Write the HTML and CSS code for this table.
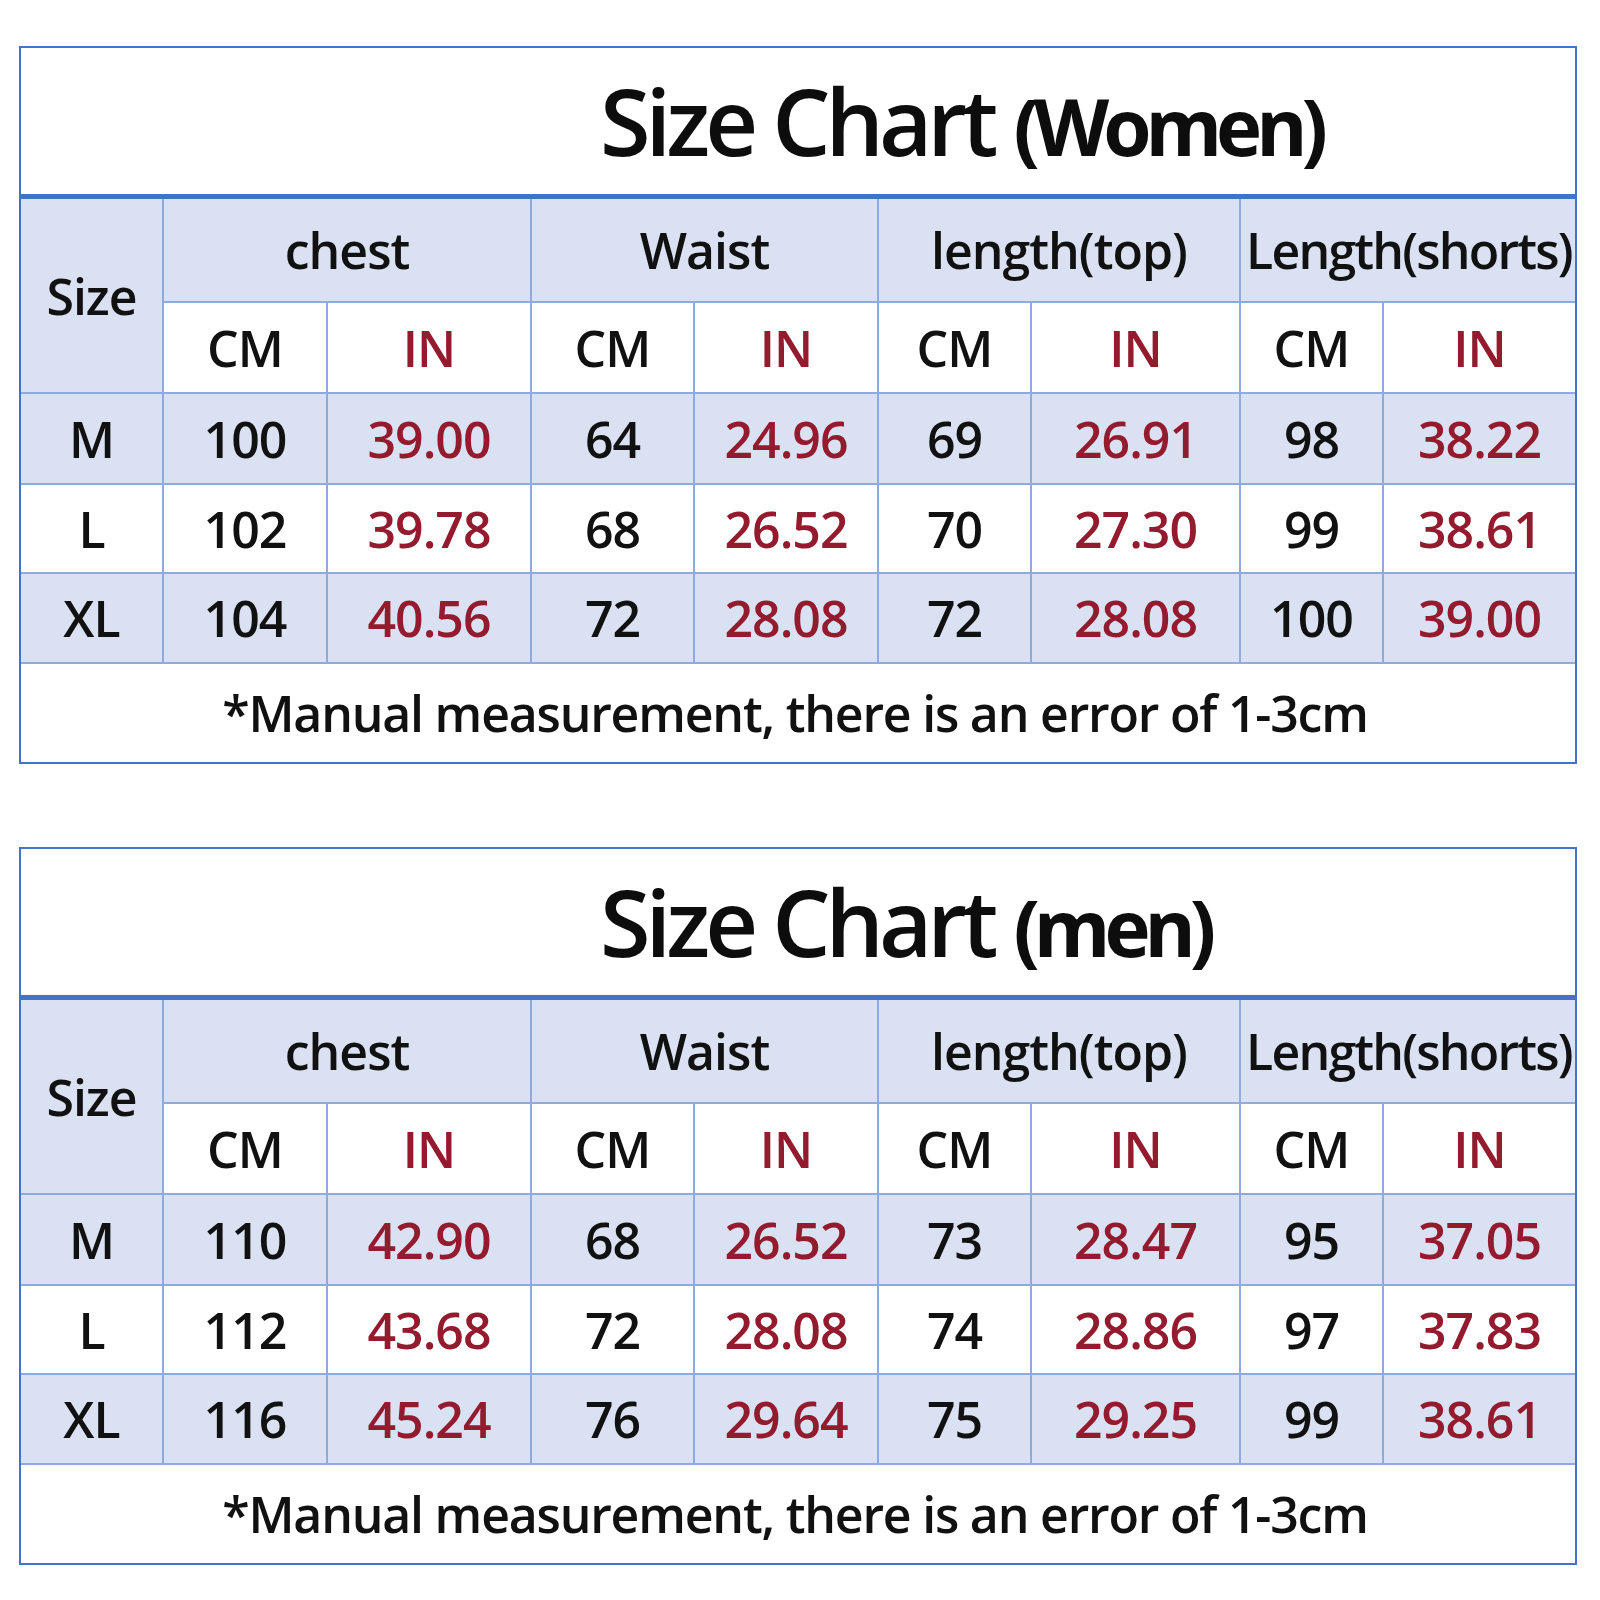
FILE: index.html
```html
<!DOCTYPE html>
<html>
<head>
<meta charset="utf-8">
<link rel="stylesheet" href="styles.css">
</head>
<body>
<div class="page">
  <section class="chart">
    <div class="title"><span class="t-main">Size Chart</span><span class="t-sub">(Women)</span></div>
    <div class="grid">
      <div class="c blue size">Size</div>
      <div class="c blue grp">chest</div>
      <div class="c blue grp">Waist</div>
      <div class="c blue grp">length(top)</div>
      <div class="c blue grp wide">Length(shorts)</div>
      <div class="c hd">CM</div><div class="c hd red">IN</div>
      <div class="c hd">CM</div><div class="c hd red">IN</div>
      <div class="c hd">CM</div><div class="c hd red">IN</div>
      <div class="c hd">CM</div><div class="c hd red">IN</div>

      <div class="c blue hd">M</div>
      <div class="c blue">100</div><div class="c blue red">39.00</div>
      <div class="c blue">64</div><div class="c blue red">24.96</div>
      <div class="c blue">69</div><div class="c blue red">26.91</div>
      <div class="c blue">98</div><div class="c blue red">38.22</div>

      <div class="c hd">L</div>
      <div class="c">102</div><div class="c red">39.78</div>
      <div class="c">68</div><div class="c red">26.52</div>
      <div class="c">70</div><div class="c red">27.30</div>
      <div class="c">99</div><div class="c red">38.61</div>

      <div class="c blue hd">XL</div>
      <div class="c blue">104</div><div class="c blue red">40.56</div>
      <div class="c blue">72</div><div class="c blue red">28.08</div>
      <div class="c blue">72</div><div class="c blue red">28.08</div>
      <div class="c blue">100</div><div class="c blue red">39.00</div>

      <div class="c note">*Manual measurement, there is an error of 1-3cm</div>
    </div>
  </section>

  <section class="chart">
    <div class="title"><span class="t-main">Size Chart</span><span class="t-sub">(men)</span></div>
    <div class="grid">
      <div class="c blue size">Size</div>
      <div class="c blue grp">chest</div>
      <div class="c blue grp">Waist</div>
      <div class="c blue grp">length(top)</div>
      <div class="c blue grp wide">Length(shorts)</div>
      <div class="c hd">CM</div><div class="c hd red">IN</div>
      <div class="c hd">CM</div><div class="c hd red">IN</div>
      <div class="c hd">CM</div><div class="c hd red">IN</div>
      <div class="c hd">CM</div><div class="c hd red">IN</div>

      <div class="c blue hd">M</div>
      <div class="c blue">110</div><div class="c blue red">42.90</div>
      <div class="c blue">68</div><div class="c blue red">26.52</div>
      <div class="c blue">73</div><div class="c blue red">28.47</div>
      <div class="c blue">95</div><div class="c blue red">37.05</div>

      <div class="c hd">L</div>
      <div class="c">112</div><div class="c red">43.68</div>
      <div class="c">72</div><div class="c red">28.08</div>
      <div class="c">74</div><div class="c red">28.86</div>
      <div class="c">97</div><div class="c red">37.83</div>

      <div class="c blue hd">XL</div>
      <div class="c blue">116</div><div class="c blue red">45.24</div>
      <div class="c blue">76</div><div class="c blue red">29.64</div>
      <div class="c blue">75</div><div class="c blue red">29.25</div>
      <div class="c blue">99</div><div class="c blue red">38.61</div>

      <div class="c note">*Manual measurement, there is an error of 1-3cm</div>
    </div>
  </section>
</div>
</body>
</html>
```

FILE: styles.css
```css
* { box-sizing: border-box; }
html, body { margin: 0; padding: 0; background: #fff; }
body { font-family: "Open Sans", "DejaVu Sans", sans-serif; color: #111; }

.page {
  padding: 46px 0 0 19px;
  display: flex;
  flex-direction: column;
  gap: 83px;
}

.chart {
  width: 1558px;
  border: 2px solid #4472c4;
  background: #fff;
}

.title {
  height: 151px;
  border-bottom: 5px solid #4472c4;
  padding: 27px 0 0 579px;
  white-space: nowrap;
  color: #0d0d0d;
  line-height: 1;
}
.t-main {
  font-size: 92px;
  font-weight: 600;
  letter-spacing: -5px;
}
.t-sub {
  display: inline-block;
  margin-left: 20px;
  font-size: 78px;
  font-weight: 700;
  letter-spacing: -6px;
}

.grid {
  display: grid;
  grid-template-columns: 141px 162px 202px 161px 182px 151px 207px 141px 191px;
  grid-template-rows: 102px 89px 89px 87px 88px 98px;
  gap: 2px;
  background: #8faadc;
}

.c {
  background: #fff;
  display: flex;
  align-items: center;
  justify-content: center;
  font-size: 50px;
  font-weight: 600;
  letter-spacing: -1px;
  white-space: nowrap;
  color: #111;
}
.blue { background: #d9e1f2; }
.red { color: #941a2d; }
.size { grid-row: span 2; }
.grp { grid-column: span 2; }
.wide { letter-spacing: -1.8px; padding-left: 2px; }
.note { grid-column: 1 / -1; letter-spacing: -1.2px; padding-right: 6px; }
```
